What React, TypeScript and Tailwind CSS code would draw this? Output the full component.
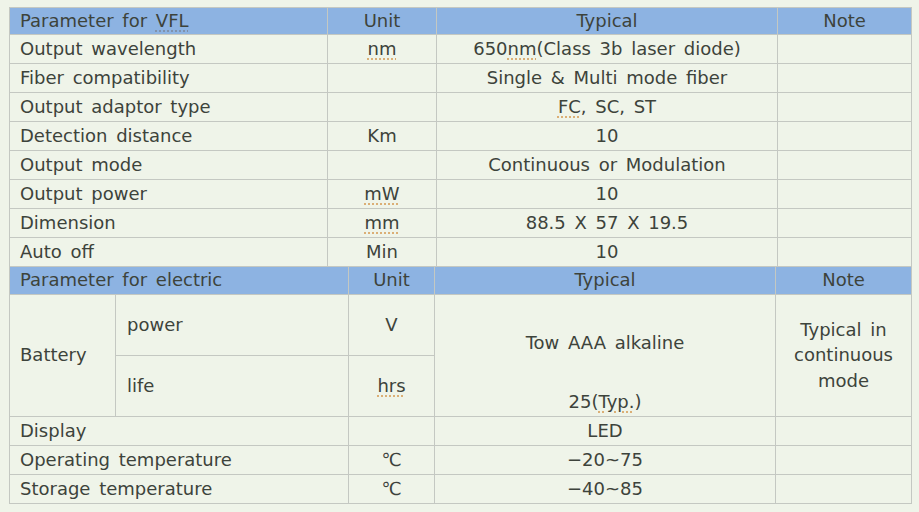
import React from "react";

const B = "border border-[#c4c8c2]";
const U = "underline decoration-dotted decoration-[#d9a86a] underline-offset-[4px]";

function Sp({ children }: { children: React.ReactNode }) {
  return <span className={U}>{children}</span>;
}

const vflRows: [React.ReactNode, React.ReactNode, React.ReactNode][] = [
  ["Output wavelength", <Sp>nm</Sp>, <><span>650</span><Sp>nm</Sp><span>(Class 3b laser diode)</span></>],
  ["Fiber compatibility", "", "Single & Multi mode fiber"],
  ["Output adaptor type", "", <><Sp>FC</Sp>, SC, ST</>],
  ["Detection distance", "Km", "10"],
  ["Output mode", "", "Continuous or Modulation"],
  ["Output power", <Sp>mW</Sp>, "10"],
  ["Dimension", <Sp>mm</Sp>, "88.5 X 57 X 19.5"],
  ["Auto off", "Min", "10"],
];

export default function App() {
  return (
    <div
      className="w-[919px] h-[512px] bg-[#eff4e9] text-[#3d433b] text-[18px] overflow-hidden"
      style={{ fontFamily: '"DejaVu Sans", "Noto Sans CJK KR", sans-serif', wordSpacing: "3px" }}
    >
      <div className="pt-[7px] pl-[9px]">
        <table className="border-collapse table-fixed w-[902px]">
          <colgroup>
            <col className="w-[318px]" />
            <col className="w-[109px]" />
            <col className="w-[341px]" />
            <col className="w-[134px]" />
          </colgroup>
          <tbody>
            <tr className="h-[27px] bg-[#8db3e2] leading-[22px]">
              <td className={`${B} pl-[10px] p-0`}>
                Parameter for <span className="underline decoration-dotted decoration-[#7f8ea8] underline-offset-[4px]">VFL</span>
              </td>
              <td className={`${B} text-center p-0`}>Unit</td>
              <td className={`${B} text-center p-0`}>Typical</td>
              <td className={`${B} text-center p-0`}>Note</td>
            </tr>
            {vflRows.map((r, i) => (
              <tr key={i} className="h-[29px] leading-[22px]">
                <td className={`${B} pl-[10px] p-0`}>{r[0]}</td>
                <td className={`${B} text-center p-0`}>{r[1]}</td>
                <td className={`${B} text-center p-0`}>{r[2]}</td>
                <td className={`${B} p-0`}></td>
              </tr>
            ))}
          </tbody>
        </table>
        <table className="border-collapse table-fixed w-[902px]">
          <colgroup>
            <col className="w-[106px]" />
            <col className="w-[233px]" />
            <col className="w-[86px]" />
            <col className="w-[341px]" />
            <col className="w-[136px]" />
          </colgroup>
          <tbody>
            <tr className="h-[27px] bg-[#8db3e2] leading-[22px]">
              <td colSpan={2} className={`${B} border-t-0 pl-[10px] p-0`}>Parameter for electric</td>
              <td className={`${B} border-t-0 text-center p-0`}>Unit</td>
              <td className={`${B} border-t-0 text-center p-0`}>Typical</td>
              <td className={`${B} border-t-0 text-center p-0`}>Note</td>
            </tr>
            <tr className="h-[61px] leading-[22px]">
              <td rowSpan={2} className={`${B} pl-[10px] p-0`}>Battery</td>
              <td className={`${B} pl-[11px] p-0`}>power</td>
              <td className={`${B} text-center p-0`}>V</td>
              <td rowSpan={2} className={`${B} text-center p-0`}>
                <div className="flex flex-col items-center pt-[34px] gap-[37px]">
                  <span>Tow AAA alkaline</span>
                  <span>
                    25(<Sp>Typ.</Sp>)
                  </span>
                </div>
              </td>
              <td rowSpan={2} className={`${B} text-center p-0 leading-[25.5px]`}>
                Typical in
                <br />
                continuous
                <br />
                mode
              </td>
            </tr>
            <tr className="h-[61px] leading-[22px]">
              <td className={`${B} pl-[11px] p-0`}>life</td>
              <td className={`${B} text-center p-0`}>
                <Sp>hrs</Sp>
              </td>
            </tr>
            {[
              ["Display", "", "LED"],
              ["Operating temperature", "℃", "−20~75"],
              ["Storage temperature", "℃", "−40~85"],
            ].map((r, i) => (
              <tr key={i} className="h-[29px] leading-[22px]">
                <td colSpan={2} className={`${B} pl-[10px] p-0`}>{r[0]}</td>
                <td className={`${B} text-center p-0`}>{r[1]}</td>
                <td className={`${B} text-center p-0`}>{r[2]}</td>
                <td className={`${B} p-0`}></td>
              </tr>
            ))}
          </tbody>
        </table>
      </div>
    </div>
  );
}
